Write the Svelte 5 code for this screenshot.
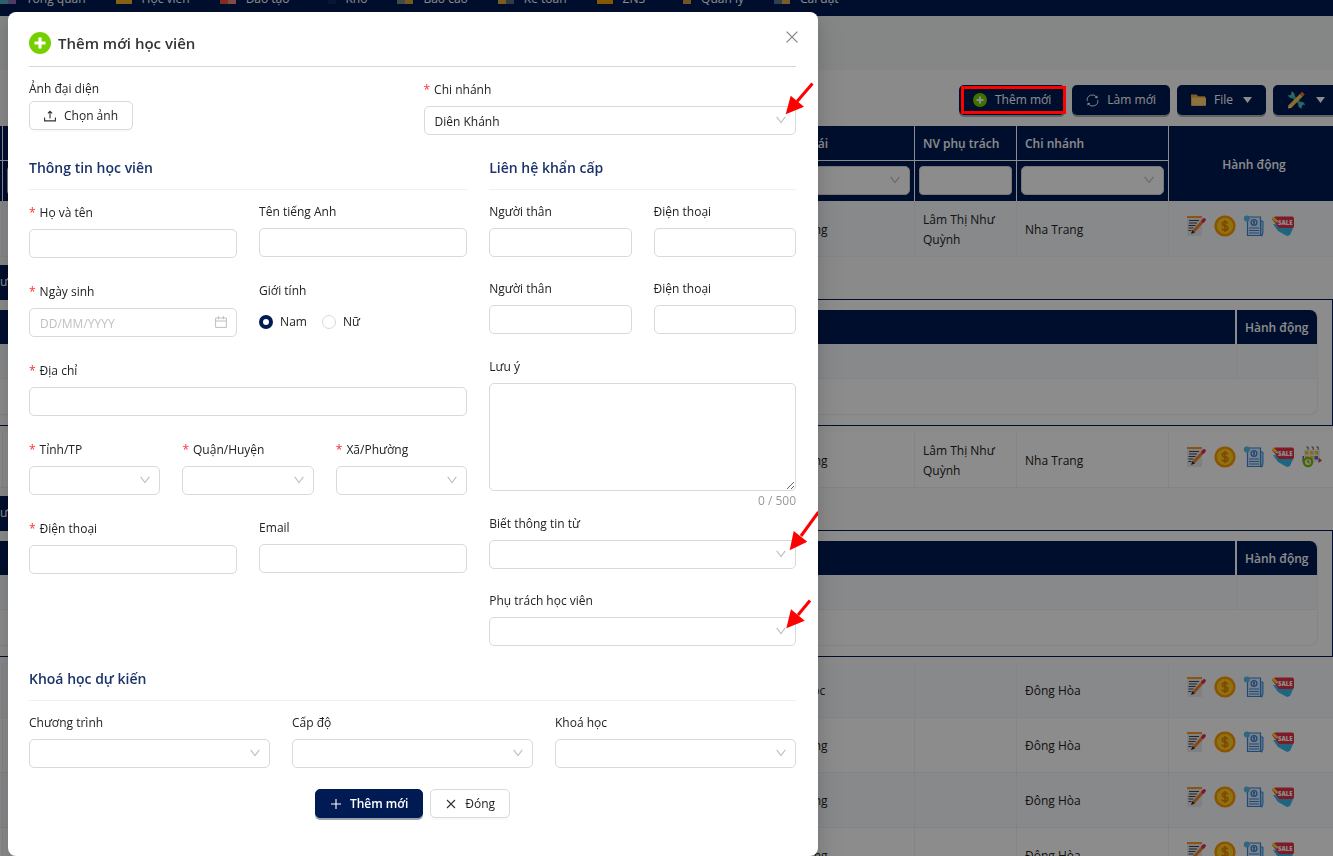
<script>
  const navItems = [
    { label: 'Tổng quan', color: '#4fb3bf', alt: '#8e6bbf' },
    { label: 'Học viên', color: '#f2b824', alt: '#f2b824' },
    { label: 'Đào tạo', color: '#f0503c', alt: '#f58a7a' },
    { label: 'Kho', color: '#001b54', alt: '#0c2a66' },
    { label: 'Báo cáo', color: '#7a8a90', alt: '#e0a030' },
    { label: 'Kế toán', color: '#e5a83a', alt: '#5c6b80' },
    { label: 'ZNS', color: '#f5a000', alt: '#f5a000' },
    { label: 'Quản lý', color: '#001b54', alt: '#d99a4a' },
    { label: 'Cài đặt', color: '#5c7690', alt: '#e0a850' }
  ];

  const rows = [
    { status: 'Tiềm năng', staff: 'Lâm Thị Như Quỳnh', branch: 'Nha Trang', tinted: true, expanded: true },
    { status: 'Tiềm năng', staff: 'Lâm Thị Như Quỳnh', branch: 'Nha Trang', expanded: true, schedule: true },
    { status: 'Muốn học', staff: '', branch: 'Đông Hòa', tinted: true },
    { status: 'Tiềm năng', staff: '', branch: 'Đông Hòa' },
    { status: 'Tiềm năng', staff: '', branch: 'Đông Hòa', tinted: true },
    { status: 'Tiềm năng', staff: '', branch: 'Đông Hòa' }
  ];

  let gender = $state('nam');
  let note = $state('');
</script>

{#snippet chevron()}
  <svg class="chevron" viewBox="0 0 10 8" aria-hidden="true"><path d="M.7.8 5 6.6 9.3.8" /></svg>
{/snippet}

{#snippet plusBadge()}
  <svg class="plus-badge" viewBox="0 0 22 22" aria-hidden="true">
    <circle cx="11" cy="11" r="11" fill="#76d000" />
    <path d="M11 5.5v11M5.5 11h11" stroke="#fff" stroke-width="3.2" />
  </svg>
{/snippet}

{#snippet selectField(id, label, required, arrow, options)}
  <div class="field">
    <label for={id} class:required>{label}</label>
    <div class="control">
      <select {id}>
        {#each options as option}<option>{option}</option>{/each}
      </select>
      {@render chevron()}
      {#if arrow}
        <svg class="arrow {arrow.name}" viewBox={arrow.box} aria-hidden="true">
          <path d={arrow.shaft} stroke="#f00" stroke-width="3" />
          <path d={arrow.head} fill="#f00" />
        </svg>
      {/if}
    </div>
  </div>
{/snippet}

{#snippet textField(id, label, required)}
  <div class="field">
    <label for={id} class:required>{label}</label>
    <input class="box" type="text" {id} />
  </div>
{/snippet}

<div class="page">
  <nav>
    {#each navItems as item}
      <a href="#top">
        <svg viewBox="0 0 16 16" aria-hidden="true">
          <rect x="0" y="1" width="8" height="12" fill={item.color} />
          <rect x="8" y="1" width="8" height="12" fill={item.alt} />
        </svg>
        <span>{item.label}</span>
      </a>
    {/each}
  </nav>

  <div class="crumbs"></div>

  <main>
    <div class="toolbar">
      <button type="button" class="tool">{@render plusBadge()}Thêm mới</button>
      <button type="button" class="tool">
        <svg class="reload" viewBox="0 0 14 14" aria-hidden="true">
          <path d="M1.3 7.500A5.600 5.600 0 0 1 11.500 3.500M12.700 6.500A5.600 5.600 0 0 1 2.500 10.500" />
          <path d="M12.600 1.600 12.200 4.900 9.300 3.900zM1.400 12.400l.4-3.300 2.900 1z" class="tip" />
        </svg>Làm mới
      </button>
      <button type="button" class="tool file">
        <svg class="folder" viewBox="0 0 16 14" aria-hidden="true">
          <path d="M0 1h6l1.5 2H15v10H0z" fill="#e8a93a" />
          <path d="M1 4.5h15V13H1z" fill="#ffcf70" />
        </svg>File
        <svg class="caret" viewBox="0 0 9 6" aria-hidden="true"><path d="M0 0h9L4.500 6z" fill="#fff" /></svg>
      </button>
      <button type="button" class="tool tools" aria-label="Công cụ">
        <svg class="wrench" viewBox="0 0 20 20" aria-hidden="true">
          <path d="M5 5l11 11" stroke="#35a8a0" stroke-width="3.4" />
          <path d="M1 4.500a4 4 0 0 0 5 3.500l2-2A4 4 0 0 0 4.500 1v3L3 5.200zM19 15.500a4 4 0 0 0-5-3.500l-2 2a4 4 0 0 0 3.500 5v-3l1.500-1.200z" fill="#4cc0b8" />
          <path d="M3 17 15 5" stroke="#ffc94d" stroke-width="4" />
          <path d="M15 5l2.300-2.300" stroke="#f0713c" stroke-width="4" />
          <path d="M1 19l.8-4 3.200 3.200z" fill="#f5dfb8" />
        </svg>
        <svg class="caret" viewBox="0 0 9 6" aria-hidden="true"><path d="M0 0h9L4.500 6z" fill="#fff" /></svg>
      </button>
    </div>

    <table class="students">
      <colgroup>
        <col class="c-edge" /><col /><col class="c-status" /><col class="c-staff" /><col class="c-branch" /><col class="c-action" />
      </colgroup>
      <thead>
        <tr class="titles">
          <th></th><th></th><th>Trạng thái</th><th>NV phụ trách</th><th>Chi nhánh</th>
          <th rowspan="2" class="action">Hành động</th>
        </tr>
        <tr class="filters">
          <td></td>
          <td><input type="text" aria-label="Học viên" /></td>
          <td><div class="control"><select aria-label="Trạng thái"></select>{@render chevron()}</div></td>
          <td><input type="text" aria-label="NV phụ trách" /></td>
          <td><div class="control"><select aria-label="Chi nhánh"></select>{@render chevron()}</div></td>
        </tr>
      </thead>
      <tbody>
        {#each rows as row}
          <tr class="row" class:tinted={row.tinted} class:tall={row.expanded}>
            <td></td><td></td>
            <td>{row.status}</td>
            <td>{row.staff}</td>
            <td>{row.branch}</td>
            <td class="icons">
              <div>
                <button type="button" aria-label="Sửa">
                  <svg viewBox="0 0 22 22">
                    <path d="M2 1h15v20H2z" fill="#e9e9ee" />
                    <path d="M2 1h15v2H2z" fill="#ff9a1f" />
                    <path d="M4 5.500h10M4 8h8M3.500 10.500h7M3.500 13h5M3.500 15.500h3" stroke="#3c4350" stroke-width="1.100" />
                    <path d="M8.500 16.500 18.500 5.500" stroke="#f58220" stroke-width="3" />
                    <path d="m18 6 1.200-1.300" stroke="#e8266a" stroke-width="3.400" stroke-linecap="round" />
                    <path d="M6 19l1.300-4 2.700 2.400z" fill="#2c2c34" />
                  </svg>
                </button>
                <button type="button" aria-label="Học phí">
                  <svg viewBox="0 0 22 22">
                    <circle cx="11" cy="11" r="10.600" fill="#ff9500" />
                    <circle cx="11" cy="11" r="8.200" fill="#ffcf1f" />
                    <path d="M13.800 8.300c-.5-1-1.500-1.500-2.800-1.500-3.500 0-3.500 3.700 0 4.100 3.700.4 3.700 4.300 0 4.300-1.500 0-2.600-.6-3-1.700M11 5v12" fill="none" stroke="#f08000" stroke-width="1.700" />
                  </svg>
                </button>
                <button type="button" aria-label="Hồ sơ">
                  <svg viewBox="0 0 22 22">
                    <path d="M4.500 2h13v18.500h-13z" fill="#dcecff" stroke="#3a86d8" stroke-width="1.200" />
                    <circle cx="3.800" cy="3.500" r="3" fill="#5cb8e6" />
                    <circle cx="11" cy="7.500" r="2.900" fill="#dcecff" stroke="#3a86d8" stroke-width="1.300" />
                    <circle cx="11" cy="6.700" r="1.200" fill="#3a86d8" />
                    <path d="M9 9.600q2-3 4 0" fill="#3a86d8" />
                    <path d="M6 13h10M6 15.500h10M6 18h10" stroke="#3a86d8" stroke-width="1" />
                    <path d="M17.500 6v12l1.300 3.300L20 18V6z" fill="#8fd0f5" stroke="#3a86d8" stroke-width=".9" />
                  </svg>
                </button>
                <button type="button" aria-label="Khuyến mãi">
                  <svg viewBox="0 0 22 22">
                    <path d="M1 9l5 7 9 5 3-1 4-9z" fill="#38b8e8" />
                    <path d="M3 1.500h17q2 0 2 2V11q0 2-2 2H7L0 4z" fill="#e83246" />
                    <path d="M.5 2.500 5.500 7" stroke="#ffd83a" stroke-width="2.600" />
                    <text x="6" y="9.800">SALE</text>
                  </svg>
                </button>
                {#if row.schedule}
                  <button type="button" aria-label="Lịch học">
                    <svg viewBox="0 0 22 22">
                      <path d="M3 3.500h16V16H3z" fill="#e8eef4" />
                      <path d="M5.500.8q2.500 0 1.500 3M10.500.8q2.500 0 1.500 3M15.500.8q2.500 0 1.500 3" fill="none" stroke="#5d6f80" stroke-width="1.200" />
                      <path d="M4 5h3.500v3.500H4zM9 5h3.500v3.500H9zM14 5h3.500v3.500H14zM9 10h3.500v3.500H9zM4 10h3.500v3.500H4z" fill="#ffc21f" />
                      <path d="M13.500 10H17v3.500h-3.500zM1.500 10h1.500v6H1.500z" fill="#3f78c8" />
                      <path d="m17.500 11.500 3.500 3-3.500 2.500z" fill="#e8324a" />
                      <circle cx="7" cy="16" r="4.200" fill="#e8f5c0" stroke="#7fb800" stroke-width="2.200" />
                      <path d="M7 13.800V16l1.600 1" fill="none" stroke="#4c7000" />
                    </svg>
                  </button>
                {/if}
              </div>
            </td>
          </tr>
          {#if row.expanded}
            <tr class="detail">
              <td colspan="6">
                <button type="button" class="tab">ư</button>
                <div class="frame">
                  <table>
                    <colgroup><col /><col class="c-inner" /></colgroup>
                    <thead><tr><th></th><th>Hành động</th></tr></thead>
                    <tbody>
                      <tr class="tinted"><td></td><td></td></tr>
                      <tr><td colspan="2"></td></tr>
                    </tbody>
                  </table>
                </div>
              </td>
            </tr>
          {/if}
        {/each}
      </tbody>
    </table>
  </main>
</div>

<div class="mask">
  <div class="highlight"></div>
  <div class="modal" role="dialog" aria-modal="true" aria-labelledby="dialog-title">
    <header>
      {@render plusBadge()}
      <h1 id="dialog-title">Thêm mới học viên</h1>
      <button type="button" class="close" aria-label="Thoát">
        <svg viewBox="0 0 12 12"><path d="m.6.6 10.800 10.800M11.400.6.6 11.400" /></svg>
      </button>
    </header>

    <form onsubmit={(e) => e.preventDefault()}>
      <div class="grid two">
        <div class="upload">
          <span>Ảnh đại diện</span>
          <button type="button" class="btn">
            <svg class="up" viewBox="0 0 12 12" aria-hidden="true"><path d="M.6 7.500v3.400h10.800V7.500M6 8.500V1.200M3.900 3.300 6 1.200l2.100 2.100" /></svg>
            Chọn ảnh
          </button>
        </div>
        {@render selectField('branch', 'Chi nhánh', true, { name: 'a1', box: '784 82 30 34', shaft: 'M812.500 83.500 797 101.500', head: 'M790.700 95.700 804 106.700 785.700 114.300z' }, ['Diên Khánh'])}
      </div>

      <div class="grid main-cols">
        <section>
          <h2>Thông tin học viên</h2>
          <div class="grid two">
            {@render textField('name', 'Họ và tên', true)}
            {@render textField('english', 'Tên tiếng Anh', false)}
          </div>
          <div class="grid two">
            <div class="field">
              <label for="dob" class="required">Ngày sinh</label>
              <div class="control">
                <input class="box" type="text" id="dob" placeholder="DD/MM/YYYY" />
                <svg class="calendar" viewBox="0 0 12 12" aria-hidden="true"><path d="M.6 2h10.800v9.400H.6zM.6 5h10.800M3.500.2v3M8.500.2v3" /></svg>
              </div>
            </div>
            <fieldset class="field">
              <legend>Giới tính</legend>
              <div class="radios">
                <label><input type="radio" name="gender" value="nam" bind:group={gender} />Nam</label>
                <label><input type="radio" name="gender" value="nu" bind:group={gender} />Nữ</label>
              </div>
            </fieldset>
          </div>
          {@render textField('address', 'Địa chỉ', true)}
          <div class="grid three">
            {@render selectField('province', 'Tỉnh/TP', true, null, [])}
            {@render selectField('district', 'Quận/Huyện', true, null, [])}
            {@render selectField('ward', 'Xã/Phường', true, null, [])}
          </div>
          <div class="grid two">
            {@render textField('phone', 'Điện thoại', true)}
            {@render textField('email', 'Email', false)}
          </div>
        </section>

        <section class="contact">
          <h2>Liên hệ khẩn cấp</h2>
          <div class="grid two">
            {@render textField('relative1', 'Người thân', false)}
            {@render textField('relphone1', 'Điện thoại', false)}
          </div>
          <div class="grid two">
            {@render textField('relative2', 'Người thân', false)}
            {@render textField('relphone2', 'Điện thoại', false)}
          </div>
          <div class="field note">
            <label for="note">Lưu ý</label>
            <textarea id="note" class="box" maxlength="500" bind:value={note}></textarea>
            <output for="note">{note.length} / 500</output>
          </div>
          {@render selectField('source', 'Biết thông tin từ', false, { name: 'a2', box: '788 510 30 42', shaft: 'M818.500 512 801 536', head: 'M793.700 531 807.300 541.700 789.700 550.300z' }, [])}
          {@render selectField('owner', 'Phụ trách học viên', false, { name: 'a3', box: '784 598 30 32', shaft: 'M810 600.500 798 615', head: 'M791 609.300 804.700 620.700 786.300 628.300z' }, [])}
        </section>
      </div>

      <section class="course">
        <h2>Khoá học dự kiến</h2>
        <div class="grid three">
          {@render selectField('program', 'Chương trình', false, null, [])}
          {@render selectField('level', 'Cấp độ', false, null, [])}
          {@render selectField('course', 'Khoá học', false, null, [])}
        </div>
      </section>

      <footer>
        <button type="submit" class="btn primary">
          <svg viewBox="-1 -1 12 12" aria-hidden="true"><path d="M5 0v10M0 5h10" /></svg>Thêm mới
        </button>
        <button type="button" class="btn">
          <svg class="x" viewBox="-1 -1 12 12" aria-hidden="true"><path d="m1 1 8 8M9 1 1 9" /></svg>Đóng
        </button>
      </footer>
    </form>
  </div>
</div>

<style>
  :global(body) {
    margin: 0;
    overflow: hidden;
    font-family: "Open Sans", "Noto Sans", sans-serif;
    font-size: 12px;
    line-height: 20px;
    color: #222;
  }
  * { box-sizing: border-box; }
  button, input, select, textarea { font: inherit; color: inherit; margin: 0; }
  svg { display: block; flex: none; }
  button { cursor: pointer; }

  /* page behind the dialog */
  .page { height: 100vh; overflow: hidden; background: #fff; }
  nav {
    display: flex;
    align-items: center;
    gap: 30px;
    height: 32px;
    margin-top: -16px;
    background: #001b54;
    color: #fff;
  }
  nav a { display: flex; align-items: center; gap: 10px; margin-top: -3px; color: inherit; text-decoration: none; white-space: nowrap; }
  nav svg { width: 16px; height: 16px; }
  .crumbs { height: 54px; background: #f2f5f5; }
  main { margin-right: -6px; padding-top: 15px; background: #fbfbfb; }
  .toolbar { display: flex; justify-content: flex-end; gap: 7px; margin-bottom: 11px; }
  .tool {
    display: flex;
    align-items: center;
    gap: 8px;
    height: 30px;
    padding: 0 14px;
    border: 0;
    border-radius: 5px;
    background: #001b54;
    box-shadow: 0 2px 0 rgba(0, 10, 40, .3);
    color: #fff;
    white-space: nowrap;
  }
  .tool .plus-badge { width: 14px; height: 14px; }
  .reload { width: 13px; height: 13px; fill: none; stroke: #fff; stroke-width: 1; }
  .reload .tip { fill: #fff; stroke: none; }
  .folder { width: 15px; height: 14px; }
  .caret { width: 9px; height: 6px; margin-left: 2px; }
  .wrench { width: 19px; height: 20px; }

  table { width: 100%; table-layout: fixed; border-collapse: separate; border-spacing: 0; }
  th, td { padding: 2px 8px 0; text-align: left; }
  .c-edge { width: 3px; }
  .c-status { width: 154px; }
  .c-staff { width: 102px; }
  .c-branch { width: 152px; }
  .c-action { width: 170px; }
  .c-inner { width: 80px; }
  .students > thead { background: #001b54; color: #fff; }
  .titles th { height: 35px; border-right: 1px solid #fff; border-bottom: 1px solid #fff; font-weight: 600; }
  .titles .action { border: 0; text-align: center; }
  .filters td { height: 40px; padding: 4px 4px 5px; border-right: 1px solid #fff; }
  .filters td:first-child, .row td:first-child { padding: 0; }
  .filters input, .filters select {
    display: block;
    width: 100%;
    height: 29px;
    padding: 0 8px;
    border: 1px solid #d9d9d9;
    border-radius: 4px;
    background: #fff;
    appearance: none;
  }
  .row { background: #fff; }
  .tinted { background: #f8fafd; }
  .row td { height: 55px; border-right: 1px solid #f0f0f0; border-bottom: 1px solid #f0f0f0; }
  .row.tall td { height: 56px; }
  .row .icons { padding: 0 0 6px 16px; border-right: 0; }
  .icons div { display: flex; gap: 7px; }
  .icons button { width: 22px; height: 22px; padding: 0; border: 0; background: none; }
  .icons svg { width: 22px; height: 22px; }
  .icons text { font-size: 6px; font-weight: 800; fill: #fff; }
  .detail > td { padding: 8px 6px 6px 0; }
  .tab { display: block; width: 90px; height: 34px; padding: 0; border: 0; background: #001b54; color: #fff; text-align: left; }
  .frame { border: 1px solid #001b54; border-left: 0; padding: 10px 14px 10px 0; background: #fff; }
  .frame table { border: 1px solid #f0f0f0; border-width: 0 1px 1px 0; border-radius: 0 8px 8px 0; overflow: hidden; }
  .frame th { height: 34px; background: #001b54; color: #fff; font-weight: 600; white-space: nowrap; }
  .frame th:first-child { border-right: 2px solid #fff; }
  .frame td { height: 35px; border-bottom: 1px solid #f0f0f0; }
  .frame .tinted td:first-child { border-right: 1px solid #f0f0f0; }
  .frame tr:last-child td { border-bottom: 0; }

  /* dialog */
  .mask { position: fixed; inset: 0; padding: 12px 8px; overflow: hidden; background: rgba(0, 0, 0, .45); }
  .highlight { position: absolute; top: 86px; right: 267px; width: 105px; height: 28px; border: 3px solid #f00; }
  .modal {
    position: relative;
    width: 100%;
    max-width: 810px;
    padding: 20px 22px 38px 21px;
    border-radius: 8px;
    background: #fff;
    box-shadow: 0 6px 16px rgba(0, 0, 0, .1), 0 9px 28px 8px rgba(0, 0, 0, .08);
  }
  header { display: flex; align-items: center; gap: 7px; padding-bottom: 12px; border-bottom: 1px solid #d6d6d6; margin-bottom: 10px; }
  header .plus-badge { width: 22px; height: 22px; }
  h1 { margin: 0; font-size: 15px; line-height: 22px; font-weight: 600; color: #333; }
  .close { position: absolute; top: 15px; right: 16px; display: grid; place-items: center; width: 20px; height: 20px; padding: 0; border: 0; background: none; }
  .close svg { width: 12px; height: 12px; stroke: #888; stroke-width: 1.3; }
  h2 { margin: 0 0 10px; padding-bottom: 10px; border-bottom: 1px solid #f0f0f0; font-size: 14px; line-height: 22px; font-weight: 600; color: #1a3368; }

  .grid { display: grid; column-gap: 22px; align-items: start; }
  .two { grid-template-columns: repeat(2, minmax(0, 1fr)); }
  .three { grid-template-columns: repeat(3, minmax(0, 1fr)); }
  .main-cols { grid-template-columns: minmax(0, 10fr) minmax(0, 7fr); margin-top: 22px; }
  section { display: flex; flex-direction: column; }
  section > .grid, section > .field { margin-bottom: 21px; }
  .contact > .grid, .contact > .field { margin-bottom: 20px; }
  section.contact > .note { margin: 1px 0; }
  .course { margin-top: 2px; }
  .field { min-width: 0; margin: 0; padding: 0; border: 0; }
  .field > label, legend { display: block; padding: 0 0 4px; line-height: 24px; white-space: nowrap; }
  .field > label.required { line-height: 25px; }
  .required::before { content: "*"; margin-right: 4px; color: #ff2f32; }
  .control { position: relative; }
  .box, .control select {
    display: block;
    width: 100%;
    height: 29px;
    padding: 2px 10px 0;
    border: 1px solid #d9d9d9;
    border-radius: 5px;
    background: #fff;
    outline: 0;
    appearance: none;
  }
  textarea.box { height: 108px; padding: 4px 10px; resize: vertical; }
  .box::placeholder { color: #bfbfbf; opacity: 1; }
  .chevron { position: absolute; top: 10px; right: 10px; width: 10px; height: 8px; fill: none; stroke: #bfbfbf; stroke-width: 1.1; pointer-events: none; }
  .calendar { position: absolute; top: 8px; right: 10px; width: 12px; height: 12px; fill: none; stroke: #bfbfbf; stroke-width: 1; pointer-events: none; }
  output { display: block; height: 20px; text-align: right; color: #999; }
  .radios { display: flex; gap: 15px; height: 29px; align-items: center; }
  .radios label { display: flex; align-items: center; gap: 7px; }
  .radios input { appearance: none; width: 14px; height: 14px; border: 1px solid #d9d9d9; border-radius: 50%; background: #fff; }
  .radios input:checked { border: 4px solid #001b54; }

  .upload span { display: block; line-height: 24px; }
  .btn {
    display: flex;
    align-items: center;
    gap: 8px;
    height: 29px;
    padding: 1px 14px 0;
    border: 1px solid #d9d9d9;
    border-radius: 5px;
    background: #fff;
    box-shadow: 0 2px 0 rgba(0, 0, 0, .02);
    white-space: nowrap;
  }
  .btn svg { width: 12px; height: 12px; fill: none; stroke: #333; stroke-width: 1.1; }
  .primary { border-color: #001b54; background: #001b54; color: #fff; font-weight: 600; box-shadow: 0 2px 0 rgba(0, 20, 60, .4); }
  .btn.primary svg { stroke: #fff; }
  footer { display: flex; justify-content: center; gap: 7px; }

  .arrow { position: absolute; width: 30px; pointer-events: none; z-index: 1; }
  .a1 { top: -24px; right: -18px; height: 34px; }
  .a2 { top: -30px; right: -22px; height: 42px; }
  .a3 { top: -19px; right: -18px; height: 32px; }
</style>
